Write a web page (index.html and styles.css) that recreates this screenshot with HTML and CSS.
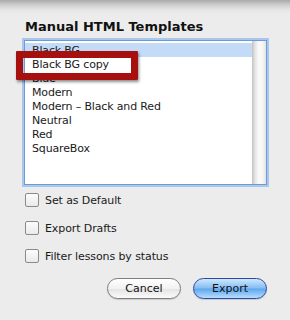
FILE: index.html
```html
<!DOCTYPE html>
<html lang="en">

<head>
    <meta charset="UTF-8">
    <meta name="viewport" content="width=device-width, initial-scale=1.0">
    <title>Manual HTML Templates</title>
    <link rel="stylesheet" href="styles.css">
</head>

<body>

    <div class="sheet">
        <h1 class="title">Manual HTML Templates</h1>

        <div class="list">
            <ul class="items">
                <li class="selected">Black BG</li>
                <li>Black BG copy</li>
                <li>Blue</li>
                <li>Modern</li>
                <li>Modern &ndash; Black and Red</li>
                <li>Neutral</li>
                <li>Red</li>
                <li>SquareBox</li>
            </ul>
            <div class="scrollbar"></div>
        </div>

        <div class="marker"></div>

        <div class="options">
            <label class="option"><span class="check"></span>Set as Default</label>
            <label class="option"><span class="check"></span>Export Drafts</label>
            <label class="option"><span class="check"></span>Filter lessons by status</label>
        </div>

        <div class="actions">
            <button class="btn">Cancel</button>
            <button class="btn primary">Export</button>
        </div>
    </div>

</body>

</html>
```

FILE: styles.css
```css
body {
    margin: 0;
    width: 290px;
    height: 320px;
    overflow: hidden;
    background-color: #ececec;
    font-family: "DejaVu Sans", sans-serif;
    color: #1a1a1a;
}

.sheet {
    position: relative;
    height: 320px;
    box-sizing: border-box;
    padding: 18px 23px 0 24px;
    background: linear-gradient(to bottom, #a9a9a9 0px, #cfcfcf 5px, #e6e6e6 10px, #ececec 14px);
}

.title {
    margin: 0 0 0 1px;
    font-size: 13px;
    font-weight: bold;
    line-height: 17px;
    height: 22px;
    color: #111;
}

.list {
    display: flex;
    height: 143px;
    border: 1px solid #6e9ad6;
    box-shadow: 0 0 0 2px #a8c6ee;
    background-color: #fff;
}

.items {
    flex: 1;
    margin: 0;
    padding: 2px 0 0;
    list-style: none;
    font-size: 11px;
    letter-spacing: -0.15px;
}

.items li {
    height: 14px;
    line-height: 15px;
    padding-left: 7px;
}

.items li.selected {
    background-color: #c4dbf8;
}

.scrollbar {
    width: 14px;
    background: linear-gradient(to right, #c2c2c2 0px, #e4e4e4 3px, #fbfbfb 7px, #f4f4f4 11px, #e2e2e2 14px);
}

.marker {
    position: absolute;
    left: 16px;
    top: 51px;
    width: 108px;
    height: 15px;
    border: 7px solid #a6100f;
    border-radius: 1px;
    box-shadow: 1px 2px 3px rgba(0, 0, 0, 0.45);
}

.options {
    display: flex;
    flex-direction: column;
    gap: 14px;
    margin-top: 8px;
    margin-left: 1px;
}

.option {
    display: flex;
    align-items: center;
    gap: 6px;
    height: 14px;
    font-size: 11px;
    letter-spacing: -0.1px;
}

.check {
    width: 12px;
    height: 12px;
    border: 1px solid #8a8a8a;
    border-radius: 2px;
    background: linear-gradient(to bottom, #fdfdfd, #eaeaea);
}

.actions {
    display: flex;
    justify-content: flex-end;
    gap: 12px;
    margin-top: 15px;
}

.btn {
    width: 74px;
    height: 21px;
    padding: 0;
    font-family: "DejaVu Sans", sans-serif;
    font-size: 11px;
    color: #111;
    border: 1px solid #7d7d7d;
    border-radius: 11px;
    background: linear-gradient(to bottom, #ffffff 0%, #f2f2f2 50%, #e3e3e3 51%, #fafafa 100%);
    box-shadow: 0 1px 1px rgba(0, 0, 0, 0.15);
}

.btn.primary {
    border-color: #2a4c9c;
    background: linear-gradient(to bottom, #cfe7ff 0%, #86bdf3 48%, #5ea6ee 52%, #b6ddff 100%);
}
```
